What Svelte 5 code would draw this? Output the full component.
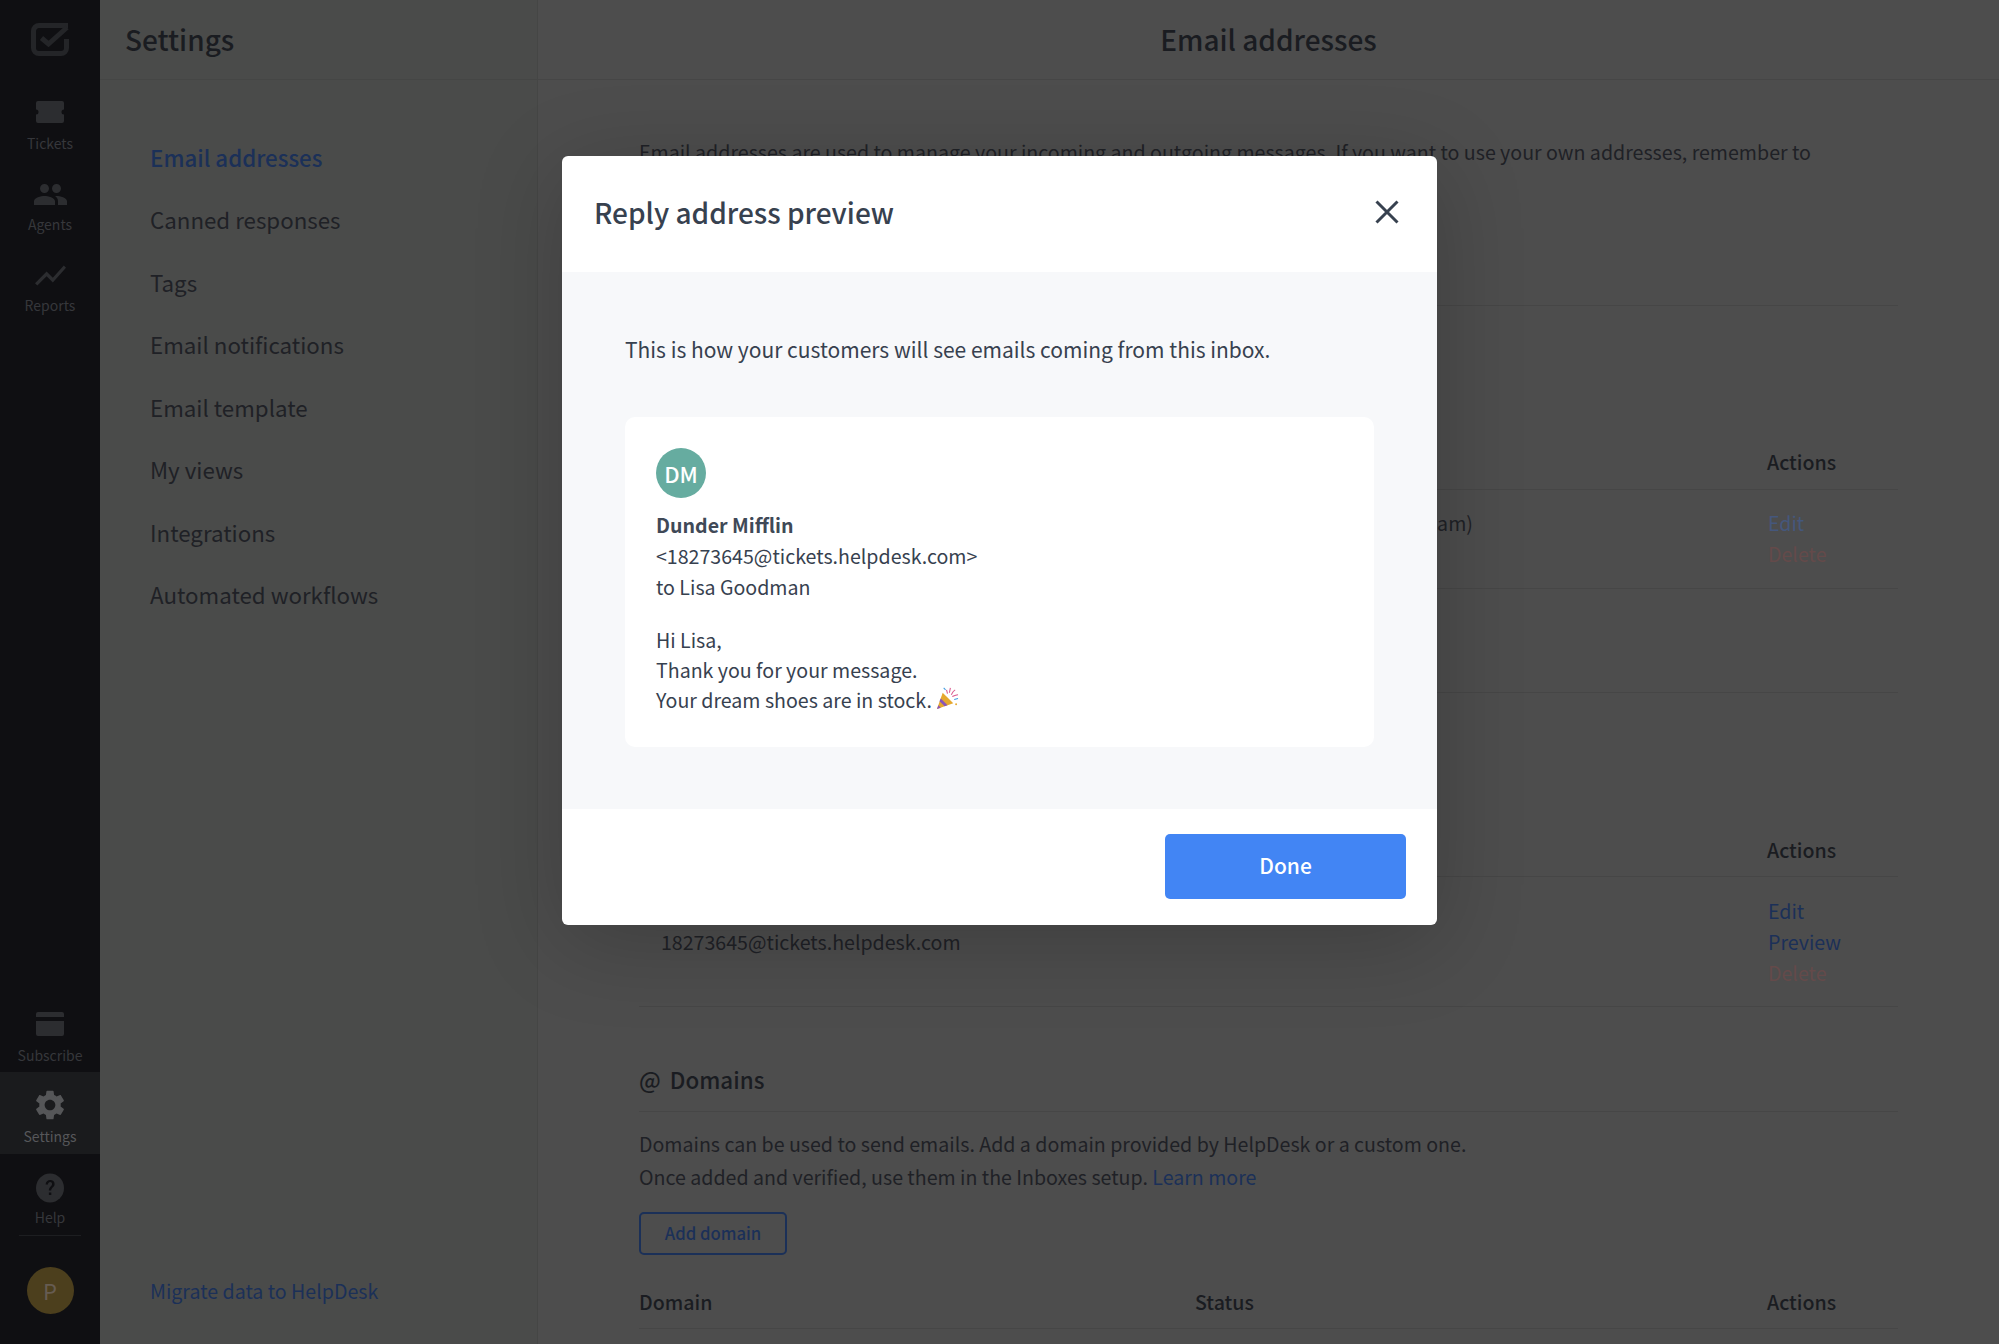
<script>
  const navTop = [
    { label: 'Tickets', icon: 'ticket' },
    { label: 'Agents', icon: 'agents' },
    { label: 'Reports', icon: 'reports' }
  ];
  const settingsLinks = [
    'Email addresses',
    'Canned responses',
    'Tags',
    'Email notifications',
    'Email template',
    'My views',
    'Integrations',
    'Automated workflows'
  ];
</script>

{#snippet icon(name)}
  {#if name === 'ticket'}
    <svg viewBox="0 0 28 24" width="28" height="24"><path d="M2 1h24a2 2 0 0 1 2 2v6.5a2.5 2.5 0 0 0 0 5V21a2 2 0 0 1-2 2H2a2 2 0 0 1-2-2v-6.5a2.5 2.5 0 0 0 0-5V3a2 2 0 0 1 2-2z" /></svg>
  {:else if name === 'agents'}
    <svg viewBox="1 5 22 14" width="33" height="21"><path d="M16 11c1.66 0 2.99-1.34 2.99-3S17.66 5 16 5c-1.66 0-3 1.34-3 3s1.34 3 3 3zm-8 0c1.66 0 2.99-1.34 2.99-3S9.66 5 8 5C6.34 5 5 6.34 5 8s1.34 3 3 3zm0 2c-2.33 0-7 1.17-7 3.5V19h14v-2.5c0-2.33-4.67-3.5-7-3.5zm8 0c-.29 0-.62.02-.97.05 1.16.84 1.97 1.97 1.97 3.45V19h6v-2.5c0-2.33-4.67-3.5-7-3.5z" /></svg>
  {:else if name === 'reports'}
    <svg viewBox="2 5.5 20 13" width="31" height="21"><path d="M3.5 18.49l6-6.01 4 4L22 6.92l-1.41-1.41-7.09 7.97-4-4L2 16.99z" /></svg>
  {:else if name === 'card'}
    <svg viewBox="0 0 28 24" width="28" height="24"><path d="M2 0h24a2 2 0 0 1 2 2v3H0V2a2 2 0 0 1 2-2zM0 9h28v13a2 2 0 0 1-2 2H2a2 2 0 0 1-2-2z" /></svg>
  {:else if name === 'gear'}
    <svg viewBox="2.6 2 18.8 20" width="28" height="30"><path d="M19.14 12.94c.04-.3.06-.61.06-.94 0-.32-.02-.64-.07-.94l2.03-1.58c.18-.14.23-.41.12-.61l-1.92-3.32c-.12-.22-.37-.29-.59-.22l-2.39.96c-.5-.38-1.03-.7-1.62-.94l-.36-2.54c-.04-.24-.24-.41-.48-.41h-3.84c-.24 0-.43.17-.47.41l-.36 2.54c-.59.24-1.13.57-1.62.94l-2.39-.96c-.22-.08-.47 0-.59.22L2.74 8.87c-.12.21-.08.47.12.61l2.03 1.58c-.05.3-.09.63-.09.94s.02.64.07.94l-2.03 1.58c-.18.14-.23.41-.12.61l1.92 3.32c.12.22.37.29.59.22l2.39-.96c.5.38 1.03.7 1.62.94l.36 2.54c.05.24.24.41.48.41h3.84c.24 0 .44-.17.47-.41l.36-2.54c.59-.24 1.13-.56 1.62-.94l2.39.96c.22.08.47 0 .59-.22l1.92-3.32c.12-.22.07-.47-.12-.61l-2.01-1.58zM12 15.6c-1.98 0-3.6-1.62-3.6-3.6s1.62-3.6 3.6-3.6 3.6 1.62 3.6 3.6-1.62 3.6-3.6 3.6z" /></svg>
  {:else if name === 'help'}
    <svg viewBox="0 0 28 30" width="28" height="30">
      <ellipse cx="14" cy="15" rx="14" ry="14.5" />
      <path class="cut" d="M9.6 11.4c.2-2.8 2.1-4.4 4.6-4.4 2.6 0 4.4 1.6 4.4 3.9 0 3.4-3.4 3.4-3.4 6.6h-2.3c-.1-3.8 3.2-4.1 3.2-6.5 0-1.1-.8-1.9-1.9-1.9-1.3 0-2.1.9-2.2 2.3zM12.9 19.4h2.4v2.6h-2.4z" />
    </svg>
  {/if}
{/snippet}

<div class="shell">
  <aside class="rail">
    <div class="logo">
      <svg viewBox="0 0 38 33" width="38" height="33" fill="none">
        <path d="M37 2.500H8A5.500 5.500 0 0 0 2.500 8v17A5.500 5.500 0 0 0 8 30.500h22a5.500 5.500 0 0 0 5.500-5.500V16" stroke="#242528" stroke-width="5" />
        <path d="M10.500 15l7 6L36 4.500" stroke="#242528" stroke-width="5" />
      </svg>
    </div>
    <nav class="rail-group">
      {#each navTop as item}
        <div class="rail-item">
          {@render icon(item.icon)}
          <span>{item.label}</span>
        </div>
      {/each}
    </nav>
    <nav class="rail-group bottom">
      <div class="rail-item">
        {@render icon('card')}
        <span>Subscribe</span>
      </div>
      <div class="rail-item active">
        {@render icon('gear')}
        <span>Settings</span>
      </div>
      <div class="rail-item help">
        {@render icon('help')}
        <span>Help</span>
      </div>
      <div class="avatar-wrap"><div class="user">P</div></div>
    </nav>
  </aside>

  <section class="panel">
    <header class="panel-head"><h1>Settings</h1></header>
    <ul class="links">
      {#each settingsLinks as link, i}
        <li class:current={i === 0}>{link}</li>
      {/each}
    </ul>
    <div class="migrate">Migrate data to HelpDesk</div>
  </section>

  <main class="content">
    <header class="content-head"><h2>Email addresses</h2></header>
    <div class="body">
      <div class="intro">
        <p>Email addresses are used to manage your incoming and outgoing messages. If you want to use your own addresses, remember to</p>
      </div>

      <div class="table one">
        <div class="row head"><b>Address</b><b>Name</b><b>Actions</b></div>
        <div class="row cells first">
          <span>support@dundermifflin.com</span>
          <span class="name">Dunder Mifflin (Support Team)</span>
          <div class="actions"><span class="muted-link">Edit</span><span class="danger">Delete</span></div>
        </div>
      </div>

      <div class="spacer"></div>

      <div class="table two">
        <div class="row head"><b>Inbox</b><b>Status</b><b>Actions</b></div>
        <div class="row cells second">
          <span class="addr">18273645@tickets.helpdesk.com</span>
          <span></span>
          <div class="actions"><span class="link">Edit</span><span class="link">Preview</span><span class="danger">Delete</span></div>
        </div>
      </div>

      <h3 class="domains"><span class="at">@</span> Domains</h3>
      <p class="domain-copy">
        Domains can be used to send emails. Add a domain provided by HelpDesk or a custom one.<br />
        Once added and verified, use them in the Inboxes setup. <span class="link">Learn more</span>
      </p>
      <div class="add">Add domain</div>
      <div class="row head last"><b>Domain</b><b>Status</b><b>Actions</b></div>
    </div>
  </main>

  <div class="overlay">
    <div class="modal">
      <div class="modal-head">
        <h2>Reply address preview</h2>
        <svg class="close" viewBox="0 0 24 24" width="24" height="24" fill="none" stroke="#37414f" stroke-width="3">
          <path d="M1.500 1.500l21 21M22.500 1.500l-21 21" />
        </svg>
      </div>
      <div class="modal-body">
        <p class="lead">This is how your customers will see emails coming from this inbox.</p>
        <div class="mail">
          <div class="dm">DM</div>
          <div class="from">
            <strong>Dunder Mifflin</strong>
            <div>&lt;18273645@tickets.helpdesk.com&gt;</div>
            <div>to Lisa Goodman</div>
          </div>
          <div class="msg">
            <div>Hi Lisa,</div>
            <div>Thank you for your message.</div>
            <div class="stock">Your dream shoes are in stock.
              <svg viewBox="0 0 24 24" width="23" height="23">
                <path d="M1 23L7 6l11 11z" fill="#e5a82e" />
                <path d="M2.500 19l2.500 2.600-4 1.400zM5 12l7 7-3 1.100-5.400-5.300z" fill="#8a55b8" />
                <path d="M11 3l1 4M15 1l-1 5M20 3c-2 1-3 3-4 5M23 8c-2 0-4 1-6 2" stroke="#d9558c" stroke-width="1.100" fill="none" />
                <path d="M8 1l2 2M19 13l4-1" stroke="#3f9be0" stroke-width="1.100" fill="none" />
                <circle cx="21" cy="18" r="1" fill="#e5a82e" />
              </svg>
            </div>
          </div>
        </div>
      </div>
      <div class="modal-foot">
        <button>Done</button>
      </div>
    </div>
  </div>
</div>

<style>
  :global(body) {
    margin: 0;
    font-family: "Noto Sans CJK JP", "Noto Sans", sans-serif;
    background: #4d4d4d;
  }

  h1, h2, h3, p, ul {
    margin: 0;
    padding: 0;
  }

  .shell {
    position: relative;
    display: flex;
    height: 1344px;
    overflow: hidden;
    color: #1a1c21;
  }

  /* left rail */
  .rail {
    width: 100px;
    flex: none;
    display: flex;
    flex-direction: column;
    background: #0f0f12;
    color: #36373b;
  }

  .logo {
    height: 79px;
    display: flex;
    justify-content: center;
    padding-top: 23px;
    box-sizing: border-box;
  }

  .rail-group.bottom {
    margin-top: auto;
  }

  .rail-item {
    height: 81px;
    display: flex;
    flex-direction: column;
    align-items: center;
    justify-content: flex-end;
    padding-bottom: 7px;
    box-sizing: border-box;
    font-size: 14px;
    line-height: 20px;
    gap: 9px;
  }

  .rail-item svg {
    fill: #2c2d30;
    display: block;
  }

  .rail-item.active {
    background: #1a1b1d;
    color: #56575a;
    gap: 6px;
    height: 82px;
    padding-bottom: 8px;
  }

  .rail-item.active svg {
    fill: #555658;
  }

  .rail-item.help {
    padding-bottom: 8px;
    gap: 4px;
  }

  .cut {
    fill: #0f0f12;
  }

  .avatar-wrap {
    margin: 0 19px;
    border-top: 1px solid #1d1e21;
    padding: 31px 0 30px;
    display: flex;
    justify-content: center;
  }

  .user {
    width: 47px;
    height: 47px;
    border-radius: 50%;
    background: #4c3f1d;
    color: #665c52;
    font-size: 22px;
    line-height: 47px;
    text-align: center;
  }

  /* settings column */
  .panel {
    width: 438px;
    flex: none;
    display: flex;
    flex-direction: column;
    background: #4a4b4a;
    border-right: 1px solid #454645;
    box-sizing: border-box;
  }

  .panel-head {
    height: 80px;
    flex: none;
    box-sizing: border-box;
    border-bottom: 1px solid #454645;
    padding: 0 0 2px 25px;
    display: flex;
    align-items: center;
  }

  h1 {
    font-size: 28px;
    font-weight: 500;
    line-height: 40px;
  }

  .links {
    list-style: none;
    padding: 46.500px 0 0 50px;
    font-size: 22.300px;
    color: #1f2126;
  }

  .links li {
    height: 62.500px;
    line-height: 61.500px;
  }

  .links li.current {
    color: #1b3058;
    font-weight: 500;
  }

  .migrate {
    margin-top: auto;
    padding: 0 0 38px 50px;
    font-size: 19.600px;
    line-height: 30px;
    color: #1b3058;
  }

  /* main column */
  .content {
    flex: 1;
    min-width: 0;
    background: #4d4d4d;
  }

  .content-head {
    height: 80px;
    box-sizing: border-box;
    border-bottom: 1px solid #464646;
    padding-bottom: 2px;
    display: flex;
    align-items: center;
    justify-content: center;
  }

  .content-head h2 {
    font-size: 28px;
    font-weight: 500;
    line-height: 40px;
  }

  .body {
    padding: 55px 101px 0;
    font-size: 19.600px;
    color: #1f2126;
  }

  .intro {
    height: 170px;
    border-bottom: 1px solid #464646;
  }

  .intro p {
    line-height: 33px;
    white-space: nowrap;
  }

  .row {
    display: grid;
    grid-template-columns: 556px 572px 1fr;
    border-bottom: 1px solid #464646;
  }

  .row b {
    font-weight: 500;
    color: #1a1c21;
  }

  .head {
    line-height: 30px;
    padding-bottom: 12px;
  }

  .table.one {
    margin-top: 141px;
  }

  .table.two {
    margin-top: 142px;
  }

  .table.two .head {
    padding-bottom: 11px;
  }

  .spacer {
    height: 103px;
    border-bottom: 1px solid #464646;
  }

  .cells.first {
    height: 99px;
    padding-top: 17px;
    box-sizing: border-box;
    line-height: 31px;
  }

  .name {
    white-space: nowrap;
    padding-left: 2px;
  }

  .cells.second {
    height: 130px;
    padding-top: 18px;
    box-sizing: border-box;
    line-height: 31px;
  }

  .addr {
    padding: 31px 0 0 22px;
  }

  .actions {
    display: flex;
    flex-direction: column;
    padding-left: 1px;
  }

  .link {
    color: #1b3058;
  }

  .muted-link {
    color: #45577c;
  }

  .danger {
    color: #644a4a;
  }

  h3.domains {
    font-size: 22.400px;
    font-weight: 500;
    line-height: 32px;
    margin-top: 56px;
    padding-bottom: 16px;
    border-bottom: 1px solid #464646;
    color: #1a1c21;
  }

  .at {
    margin-right: 4px;
  }

  .domain-copy {
    margin-top: 15px;
    line-height: 33px;
  }

  .add {
    width: 148px;
    height: 43px;
    margin-top: 19px;
    box-sizing: border-box;
    border: 2px solid #1b3058;
    border-radius: 5px;
    color: #1b3058;
    font-size: 16.700px;
    font-weight: 500;
    line-height: 38px;
    text-align: center;
  }

  .head.last {
    margin-top: 32px;
    padding-bottom: 11px;
  }

  /* modal */
  .overlay {
    position: absolute;
    inset: 0;
    display: flex;
    justify-content: center;
    align-items: flex-start;
    padding-top: 156px;
    box-sizing: border-box;
  }

  .modal {
    width: 875px;
    height: 769px;
    display: flex;
    flex-direction: column;
    background: #fff;
    border-radius: 6px;
    overflow: hidden;
    box-shadow: 0 16px 90px rgba(0, 0, 0, 0.2);
  }

  .modal-head {
    height: 116px;
    flex: none;
    display: flex;
    align-items: center;
    justify-content: space-between;
    padding: 0 38px 4px 32px;
    box-sizing: border-box;
  }

  .modal-head h2 {
    font-size: 28px;
    font-weight: 500;
    line-height: 40px;
    color: #37414f;
  }

  .modal-body {
    flex: 1;
    background: #f7f8fa;
    padding: 59px 63px 0;
    color: #37414f;
  }

  .lead {
    font-size: 21px;
    line-height: 36px;
  }

  .mail {
    height: 330px;
    margin-top: 50px;
    box-sizing: border-box;
    padding: 31px 31px 0;
    background: #fff;
    border-radius: 10px;
    font-size: 19.600px;
  }

  .dm {
    width: 50px;
    height: 50px;
    border-radius: 50%;
    background: #66aca0;
    color: #fff;
    font-size: 22px;
    font-weight: 500;
    line-height: 50px;
    text-align: center;
  }

  .from {
    margin-top: 11px;
    line-height: 31px;
  }

  .from strong {
    font-weight: 700;
    color: #3f4957;
  }

  .msg {
    margin-top: 23px;
    line-height: 30px;
  }

  .stock svg {
    vertical-align: -2px;
  }

  .modal-foot {
    height: 116px;
    flex: none;
    display: flex;
    justify-content: flex-end;
    align-items: center;
    padding: 0 31px 1px 0;
    box-sizing: border-box;
  }

  button {
    width: 241px;
    height: 65px;
    padding: 0 0 3px;
    border: 0;
    border-radius: 5px;
    background: #4285f4;
    color: #fff;
    font: 500 21px "Noto Sans CJK JP", "Noto Sans", sans-serif;
  }
</style>
